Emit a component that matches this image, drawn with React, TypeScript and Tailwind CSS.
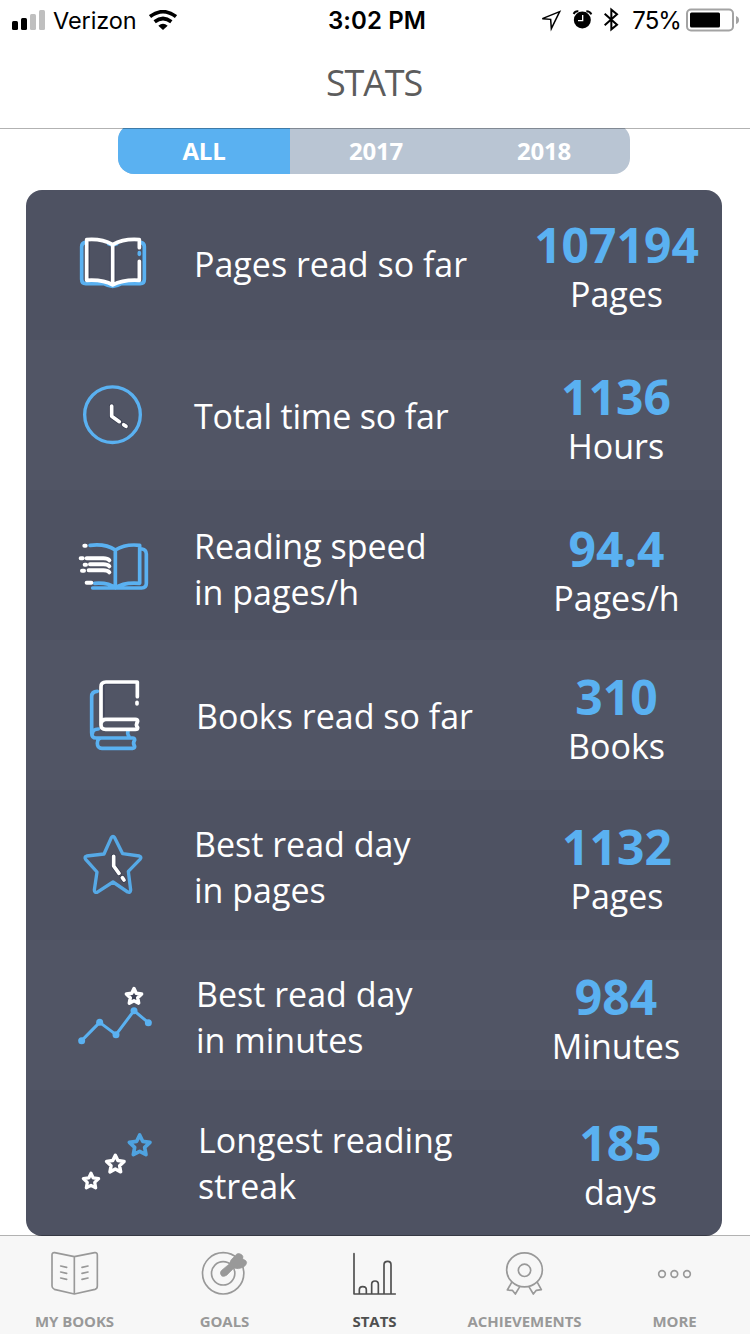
import type { ReactNode } from "react";
import { clsx } from "clsx";

interface Stat {
  id: string;
  label: string[];
  value: string;
  unit: string;
  icon: ReactNode;
  labelClass: string;
  valueClass: string;
}

interface Tab {
  id: string;
  name: string;
  icon: ReactNode;
}

const BLUE = "#5ab1f1";
const STAR = "M0 -30 L9 -11 L31 -8 L15 7 L19 29 L0 19 L-19 29 L-15 7 L-31 -8 L-9 -11 Z";

function StatIcon({ children }: { children: ReactNode }) {
  return (
    <svg
      viewBox="0 0 330 270"
      className="w-[110px] h-[90px] shrink-0"
      fill="none"
      strokeWidth="11"
      strokeLinecap="round"
      strokeLinejoin="round"
    >
      {children}
    </svg>
  );
}

const stats: Stat[] = [
  {
    id: "pages",
    label: ["Pages read so far"],
    value: "107194",
    unit: "Pages",
    labelClass: "pl-6 pb-0.5",
    valueClass: "pt-1.5 pl-px",
    icon: (
      <StatIcon>
        <path d="M76 67 Q65 69 65 80 V178 Q65 191 77 191 H132 Q146 199 158 199 Q170 199 184 191 H241 Q253 191 253 178 V80 Q253 69 242 67 M146 71 L158 75 L170 71 M238 98 V103" stroke={BLUE} />
        <path d="M88 66 V174 M151 82 V180 M165 82 V180 M232 124 V174" stroke="#3b3f55" strokeWidth="3" />
        <path d="M158 74 Q124 55 80 59 V181 Q130 178 158 195 Q190 178 238 181 V124 M158 74 V193 M158 74 Q192 55 238 59 V83" stroke="#fff" />
      </StatIcon>
    ),
  },
  {
    id: "time",
    label: ["Total time so far"],
    value: "1136",
    unit: "Hours",
    labelClass: "pl-6 pt-0.5 tracking-[-0.18px]",
    valueClass: "pt-2.5",
    icon: (
      <StatIcon>
        <circle cx="157.500" cy="134" r="83.500" stroke={BLUE} strokeWidth="10" />
        <path d="M155 108 V139 L178 155 M191 164 L198 169" stroke="#363a4c" strokeWidth="15" />
        <path d="M155 108 V139 L178 155 M191 164 L198 169" stroke="#fff" />
      </StatIcon>
    ),
  },
  {
    id: "speed",
    label: ["Reading speed", "in pages/h"],
    value: "94.4",
    unit: "Pages/h",
    labelClass: "pl-6 pt-2",
    valueClass: "pt-3.5 pl-px",
    icon: (
      <StatIcon>
        <path d="M90 76 Q136 70 166 90 Q196 71 239 76 V190 Q190 186 166 204 Q146 187 104 190 M166 90 V202 M246 87 Q259 89 259 102 V190 Q259 204 245 204 H98" stroke={BLUE} />
        <path d="M62 115 H68 M80 115 H130 Q143 115 148 121 M74 134 H78 M90 133 H130 Q143 133 148 139 M66 152 H72 M86 151 H130 Q143 151 148 157 M73 77 H77 M80 188 H94" stroke="#fff" strokeWidth="12" />
      </StatIcon>
    ),
  },
  {
    id: "books",
    label: ["Books read so far"],
    value: "310",
    unit: "Books",
    labelClass: "pl-[26px] pt-0.5",
    valueClass: "pt-2.5 pl-px",
    icon: (
      <StatIcon>
        <path d="M112 64 Q95 64 95 80 V188 Q95 204 108 204 H218 Q224 204 224 210 Q217 220 224 229 Q224 235 218 235 H126 Q112 235 112 220 Q112 205 124 204 M97 192 Q98 177 115 177 M204 184 Q201 190 207 200" stroke={BLUE} />
        <path d="M132 46 V139 M222 42 H134" stroke="#3b3f55" strokeWidth="3" />
        <path d="M232 80 V36 H138 Q123 36 123 50 V165 Q123 178 137 178 H226 Q233 178 233 173 Q226 164 233 154 Q233 148 226 148 H137 Q126 148 123 160 M231 97 V102" stroke="#fff" />
      </StatIcon>
    ),
  },
  {
    id: "best-pages",
    label: ["Best read day", "in pages"],
    value: "1132",
    unit: "Pages",
    labelClass: "pl-6 pt-1",
    valueClass: "pt-2.5 pl-0.5",
    icon: (
      <StatIcon>
        <path d="M154 53 Q159 45 164 53 L188 101 L238 108 Q246 111 240 118 L205 154 L212 210 Q211 219 203 216 L159 186 L111 217 Q103 218 103 210 L111 156 L77 118 Q72 110 80 108 L132 102 Z" stroke="#56a9e6" strokeWidth="10" />
        <path d="M161 109 V138 L177 160 M187 173 L192 180" stroke="#363a4c" strokeWidth="15" />
        <path d="M161 109 V138 L177 160 M187 173 L192 180" stroke="#fff" />
      </StatIcon>
    ),
  },
  {
    id: "best-minutes",
    label: ["Best read day", "in minutes"],
    value: "984",
    unit: "Minutes",
    labelClass: "pl-[26px] pt-1",
    valueClass: "pt-2.5",
    icon: (
      <StatIcon>
        <path d="M65 212 L119 157 L168 194 L222 122 L265 158" stroke={BLUE} strokeWidth="9" />
        <g fill={BLUE}>
          <circle cx="65" cy="212" r="10.500" />
          <circle cx="119" cy="157" r="10.500" />
          <circle cx="168" cy="194" r="10.500" />
          <circle cx="222" cy="122" r="10.500" />
          <circle cx="265" cy="158" r="10.500" />
        </g>
        <path d={STAR} transform="translate(222 78) scale(.74)" stroke="#fff" strokeWidth="14" fill="#3d4155" />
      </StatIcon>
    ),
  },
  {
    id: "streak",
    label: ["Longest reading", "streak"],
    value: "185",
    unit: "days",
    labelClass: "pl-7 pb-1",
    valueClass: "pt-0.5 pl-[9px]",
    icon: (
      <StatIcon>
        <path d={STAR} transform="translate(93 182) scale(.74)" stroke="#fff" strokeWidth="13" />
        <path d={STAR} transform="translate(166 131) scale(.85)" stroke="#fff" strokeWidth="12" />
        <path d={STAR} transform="translate(239 75)" stroke="#4fa3e0" />
      </StatIcon>
    ),
  },
];

const years = [
  { name: "ALL", className: "w-[172px] bg-[#5ab1f1]" },
  { name: "2017", className: "w-[172px]" },
  { name: "2018", className: "w-[168px] pr-1" },
];

const tabs: Tab[] = [
  {
    id: "books",
    name: "MY BOOKS",
    icon: (
      <path d="M223 50 L164 38 Q156 37 156 45 V138 Q156 145 163 148 L223 162 L285 148 Q292 146 292 138 V45 Q292 37 284 38 Z V162 M182 78 L200 82 M182 96 L200 100 M182 114 L200 118 M264 78 L246 82 M264 96 L246 100 M264 114 L246 118" />
    ),
  },
  {
    id: "goals",
    name: "GOALS",
    icon: (
      <>
        <circle cx="219.500" cy="100" r="62" />
        <circle cx="219.500" cy="100" r="35" />
        <path d="M216 108 Q206 99 216 90 L239 71 Q239 60 256 47 Q262 36 275 44 Q281 48 278 57 Q290 61 290 68 Q290 74 280 82 Q264 89 252 84 L230 106 Q222 111 216 108 Z" fill="currentColor" strokeWidth="2" />
      </>
    ),
  },
  {
    id: "stats",
    name: "STATS",
    icon: (
      <path d="M162 41 V162 H286 M178 162 V149 Q178 140 188 140 Q199 140 199 149 V162 M215 162 V133 Q215 123 225 123 Q235 123 235 133 V162 M252 162 V74 Q252 64 263 64 Q273 64 273 74 V162" />
    ),
  },
  {
    id: "achievements",
    name: "ACHIEVEMENTS",
    icon: (
      <>
        <ellipse cx="223.500" cy="89.500" rx="53.500" ry="51" />
        <circle cx="223.500" cy="91" r="18.500" />
        <path d="M185 127 L172 150 L187 151 L196 162 L208 142 M262 127 L274 149 L259 151 L250 162 L238 142" />
      </>
    ),
  },
  {
    id: "more",
    name: "MORE",
    icon: (
      <>
        <circle cx="186" cy="102" r="10" />
        <circle cx="223" cy="102" r="10" />
        <circle cx="261" cy="102" r="10" />
      </>
    ),
  },
];

function StatusBar() {
  return (
    <div className="h-10 grid grid-cols-3 items-center font-['Inter',sans-serif] text-black">
      <div className="flex items-center pl-3">
        <svg viewBox="0 0 33 20" className="w-[33px] h-5 shrink-0">
          <rect x="0" y="11" width="6" height="9" rx="1.500" />
          <rect x="9" y="8" width="6" height="12" rx="1.500" />
          <rect x="18" y="4" width="6" height="16" rx="1.500" fill="#bfbfbf" />
          <rect x="27" y="0" width="6" height="20" rx="1.500" fill="#bfbfbf" />
        </svg>
        <span className="pl-2 pt-0.5 text-[23.5px] leading-9 tracking-[-0.1px] whitespace-nowrap">Verizon</span>
        <svg viewBox="0 0 84 60" className="w-7 h-5 ml-3 shrink-0" fill="none" stroke="#000" strokeWidth="11">
          <path d="M3 20 Q42 -10 81 20" />
          <path d="M17 35 Q42 16 67 35" />
          <path d="M42 60 L28 47 Q42 35 56 47 Z" fill="#000" stroke="none" />
        </svg>
      </div>
      <span className="text-center text-[24px] leading-9 pt-0.5 pl-1 font-semibold tracking-[0.1px] whitespace-nowrap">3:02 PM</span>
      <div className="flex items-center justify-end pr-2.5">
        <svg viewBox="0 0 240 84" className="w-20 h-7 shrink-0" fill="none" stroke="#000" strokeWidth="4.500">
          <path d="M7 38 L59 17 L34 68 L32 40 Z" />
          <circle cx="127" cy="42" r="25.500" fill="#000" stroke="none" />
          <path d="M101 24 Q105 15 115 16 M139 16 Q150 16 154 25" strokeWidth="6" />
          <path d="M128 27 V44 H114" stroke="#fff" strokeWidth="4" />
          <path d="M194 23 L231 56 L214 70 V11 L231 25 L194 58" strokeWidth="6" />
        </svg>
        <span className="pl-3 pt-0.5 text-[24px] leading-9 tracking-[-0.9px] whitespace-nowrap">75%</span>
        <svg viewBox="0 0 54 24" className="w-[54px] h-6 ml-[5px] shrink-0">
          <rect x="1" y="1.500" width="46" height="21" rx="4" fill="none" stroke="#a3a3a3" strokeWidth="2" />
          <rect x="4" y="4.500" width="30" height="15" rx="1.500" />
          <path d="M50 8 Q53 9 53 12 Q53 15 50 16 Z" fill="#a3a3a3" />
        </svg>
      </div>
    </div>
  );
}

export default function App() {
  return (
    <div className="w-[750px] h-[1334px] flex flex-col overflow-hidden bg-white font-['Open_Sans',sans-serif]">
      <header className="h-32 shrink-0">
        <StatusBar />
        <h1 className="text-center text-[36px] leading-[50px] pt-[18px] pr-0.5 tracking-[-1.2px] text-[#5c5c5c]">STATS</h1>
      </header>

      <main className="relative h-[1108px] shrink-0 overflow-hidden">
        {/* Year filter, scrolled partly under the header */}
        <div className="-mt-1 mx-auto w-[512px] h-[50px] -translate-x-px flex overflow-hidden rounded-2xl bg-[#b9c5d3]">
          {years.map((year) => (
            <button
              key={year.name}
              className={clsx("pt-[3px] text-center text-[24px] tracking-[-0.2px] font-bold text-white", year.className)}
            >
              {year.name}
            </button>
          ))}
        </div>

        {/* Stats */}
        <ul className="mt-4 ml-[26px] w-[696px] h-[1046px] rounded-2xl overflow-hidden text-[34px] leading-[46px] text-white">
          {stats.map((stat) => (
            <li key={stat.id} className="h-[150px] flex items-center pl-[34px] bg-[#4e5262] even:bg-[#515565]">
              {stat.icon}
              <div className={clsx("w-[340px] shrink-0", stat.labelClass)}>
                {stat.label.map((line) => (
                  <p key={line} className="whitespace-nowrap">{line}</p>
                ))}
              </div>
              <div className={clsx("w-[212px] shrink-0 text-center", stat.valueClass)}>
                <p className="text-[48px] leading-[52px] font-bold text-[#5ab1f1]">{stat.value}</p>
                <p>{stat.unit}</p>
              </div>
            </li>
          ))}
        </ul>
        <div className="absolute inset-x-0 top-0 h-px bg-black/30" />
        <div className="absolute inset-x-0 bottom-0 h-px bg-black/30" />
      </main>

      {/* Tab bar */}
      <nav className="flex-1 grid grid-cols-5 pt-1 bg-[#f7f7f7]">
        {tabs.map((tab) => (
          <button
            key={tab.id}
            className={clsx("flex flex-col items-center", tab.id === "stats" ? "text-[#4f4f4f]" : "text-[#999999]")}
          >
            <svg
              viewBox="0 0 450 180"
              className="w-[150px] h-[60px]"
              fill="none"
              stroke="currentColor"
              strokeWidth="5"
              strokeLinecap="round"
              strokeLinejoin="round"
            >
              {tab.icon}
            </svg>
            <span className="pt-[11px] pr-px text-[15px] leading-5 tracking-[-0.05px] font-bold">{tab.name}</span>
          </button>
        ))}
      </nav>
    </div>
  );
}
